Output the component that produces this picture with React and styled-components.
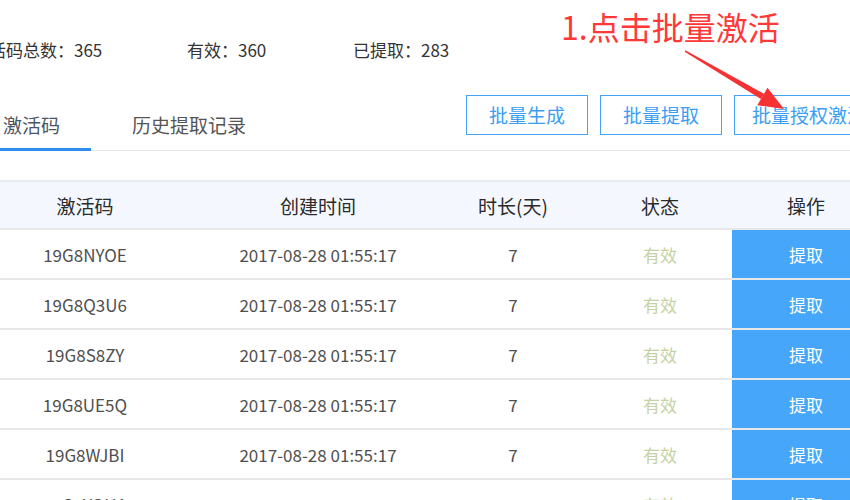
import React from "react";
import styled, { createGlobalStyle } from "styled-components";

const GlobalStyle = createGlobalStyle`
  html, body {
    margin: 0;
    padding: 0;
    background: #fff;
    font-family: "Noto Sans CJK SC", "Noto Sans", sans-serif;
  }
`;

const Page = styled.div`
  position: relative;
  width: 850px;
  height: 500px;
  overflow: hidden;
  background: #fff;
`;

const Content = styled.div`
  width: 908px;
  margin-left: -28px;
`;

const StatsRow = styled.div`
  display: flex;
  padding-top: 38px;
  line-height: 24px;
  font-size: 17px;
  color: #333;
`;

const Stat = styled.div`
  width: ${(p) => p.$width}px;
  flex: none;
  white-space: nowrap;
`;

const TabRow = styled.div`
  display: flex;
  align-items: flex-start;
  margin-top: 33px;
  height: 55px;
  border-bottom: 1px solid #e8e8e8;
`;

const Tab = styled.div`
  flex: none;
  box-sizing: border-box;
  height: 56px;
  padding: 18px 31px 0;
  margin-right: ${(p) => (p.$active ? 8 : 0)}px;
  padding-left: ${(p) => (p.$active ? 31 : 33)}px;
  line-height: 24px;
  font-size: 19px;
  white-space: nowrap;
  color: ${(p) => (p.$active ? "#4a5664" : "#555")};
  border-bottom: 3px solid ${(p) => (p.$active ? "#2d8cf0" : "transparent")};
`;

const ButtonGroup = styled.div`
  display: flex;
  flex: none;
  gap: 12px;
  margin-left: 189px;
`;

const ActionButton = styled.button`
  flex: none;
  box-sizing: border-box;
  height: 40px;
  padding: 0 ${(p) => (p.$wide ? 17 : 22)}px;
  border: 1px solid #45a3f5;
  background: #fff;
  color: #3c9ef2;
  font-family: inherit;
  font-size: 19px;
  line-height: 38px;
  white-space: nowrap;
  cursor: pointer;
`;

const Table = styled.div`
  margin-top: 29px;
`;

const Row = styled.div`
  display: grid;
  grid-template-columns: 226px 240px 150px 144px 148px;
  height: 50px;
  box-sizing: border-box;
  border-bottom: 2px solid #e8e8e8;
`;

const HeadRow = styled(Row)`
  border-top: 2px solid #e9ebee;
  background: #f4f8fe;
`;

const HeadCell = styled.div`
  display: flex;
  align-items: center;
  justify-content: center;
  font-size: 19px;
  color: #2b2b2b;
`;

const Cell = styled.div`
  display: flex;
  align-items: center;
  justify-content: center;
  font-size: 17px;
  color: ${(p) => p.$color || "#4f4f4f"};
  background: ${(p) => p.$bg || "transparent"};
`;

const Note = styled.div`
  position: absolute;
  left: 561px;
  top: 6px;
  font-size: 32px;
  line-height: 40px;
  color: #ff3838;
  white-space: nowrap;
`;

const ArrowSvg = styled.svg`
  position: absolute;
  left: 680px;
  top: 44px;
  pointer-events: none;
`;

const codes = ["19G8NYOE", "19G8Q3U6", "19G8S8ZY", "19G8UE5Q", "19G8WJBI", "19G8YQHA"];

export default function App() {
  return (
    <>
      <GlobalStyle />
      <Page>
        <Content>
          <StatsRow>
            <Stat $width={215}>激活码总数：365</Stat>
            <Stat $width={166}>有效：360</Stat>
            <Stat $width={200}>已提取：283</Stat>
          </StatsRow>
          <TabRow>
            <Tab $active>激活码</Tab>
            <Tab>历史提取记录</Tab>
            <ButtonGroup>
              <ActionButton>批量生成</ActionButton>
              <ActionButton>批量提取</ActionButton>
              <ActionButton $wide>批量授权激活</ActionButton>
            </ButtonGroup>
          </TabRow>
          <Table>
            <HeadRow>
              <HeadCell>激活码</HeadCell>
              <HeadCell>创建时间</HeadCell>
              <HeadCell>时长(天)</HeadCell>
              <HeadCell>状态</HeadCell>
              <HeadCell>操作</HeadCell>
            </HeadRow>
            {codes.map((code) => (
              <Row key={code}>
                <Cell>{code}</Cell>
                <Cell>2017-08-28 01:55:17</Cell>
                <Cell>7</Cell>
                <Cell $color="#c5d2a4">有效</Cell>
                <Cell $bg="#46a7fa" $color="#fff">提取</Cell>
              </Row>
            ))}
          </Table>
        </Content>
        <Note>1.点击批量激活</Note>
        <ArrowSvg width="110" height="70" viewBox="680 44 110 70">
          <polygon
            points="685.3,50.3 763.9,93.8 760.9,99 684.7,51.7"
            fill="#f53232"
          />
          <polygon points="784,109 757.3,105.2 767.5,87.8" fill="#f53232" />
        </ArrowSvg>
      </Page>
    </>
  );
}
